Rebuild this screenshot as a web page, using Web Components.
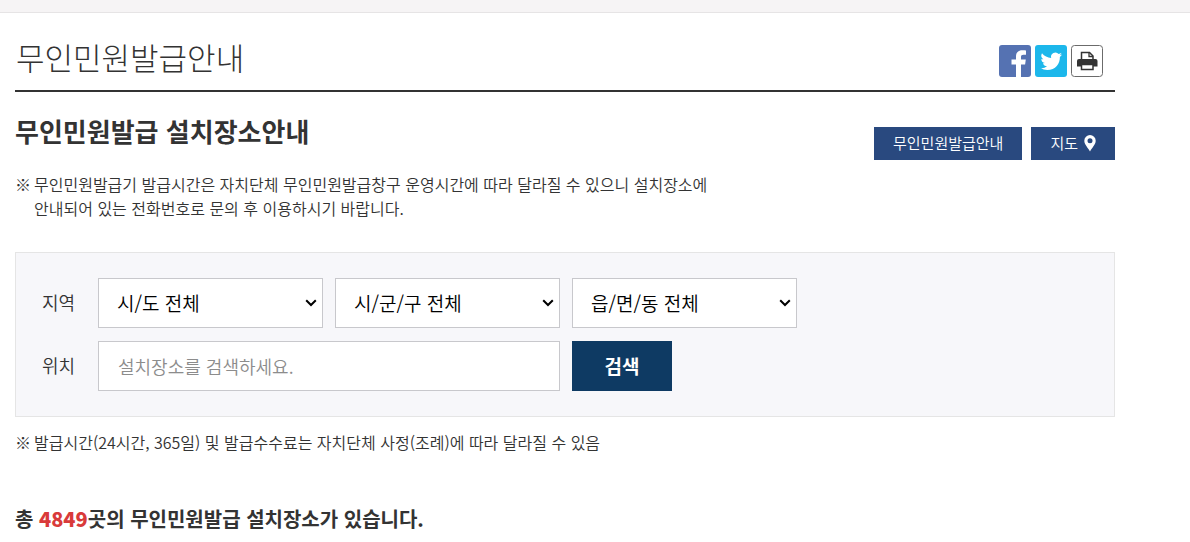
<!DOCTYPE html>
<html lang="ko">
<head>
<meta charset="utf-8">
<meta name="viewport" content="width=device-width, initial-scale=1">
<title>무인민원발급안내</title>
<style>
body {
    margin: 0;
    background: #fff;
    color: #333;
    font-family: "Noto Sans CJK KR", sans-serif;
    font-size: 16px;
    font-weight: 350;
    line-height: 24px;
}
</style>
</head>
<body>
<kiosk-page>
    <page-header slot="header">
        무인민원발급안내
        <share-link slot="share" data-icon="facebook" data-label="페이스북"></share-link>
        <share-link slot="share" data-icon="twitter" data-label="트위터"></share-link>
        <share-link slot="share" data-icon="print" data-label="인쇄"></share-link>
    </page-header>
    <section-heading>
        무인민원발급 설치장소안내
        <nav-button slot="actions">무인민원발급안내</nav-button>
        <nav-button slot="actions" data-icon="pin">지도</nav-button>
    </section-heading>
    <guide-note class="intro">무인민원발급기 발급시간은 자치단체 무인민원발급창구 운영시간에 따라 달라질 수 있으니 설치장소에<br>안내되어 있는 전화번호로 문의 후 이용하시기 바랍니다.</guide-note>
    <search-panel></search-panel>
    <guide-note>발급시간(24시간, 365일) 및 발급수수료는 자치단체 사정(조례)에 따라 달라질 수 있음</guide-note>
    <result-count>4849</result-count>
</kiosk-page>

<script>
const ICONS = {
    facebook: /*html*/`
<svg viewBox="0 0 32 32" aria-hidden="true">
    <rect width="32" height="32" rx="3" fill="#5572b2"/>
    <path fill="#fff" d="M17 32V19.500h-4.500v-5H17V11.500C17 7.500 19.300 5.200 23.200 5.200c1.600 0 2.800.1 3.800.3v4.300h-2.600c-1.700 0-2.400.8-2.400 2.300v2.400h4.800l-.7 5H22V32z"/>
</svg>`,
    twitter: /*html*/`
<svg viewBox="0 0 32 32" aria-hidden="true">
    <rect width="32" height="32" rx="3" fill="#1cb7eb"/>
    <path fill="#fff" transform="translate(5.500 5.500) scale(.9)" d="M24 4.560a9.830 9.830 0 0 1-2.830.78 4.930 4.930 0 0 0 2.170-2.720 9.860 9.860 0 0 1-3.130 1.190 4.920 4.920 0 0 0-8.380 4.490A13.980 13.980 0 0 1 1.670 3.150a4.930 4.930 0 0 0 1.520 6.570 4.900 4.900 0 0 1-2.230-.61 4.930 4.930 0 0 0 3.950 4.890 4.930 4.930 0 0 1-2.220.08 4.930 4.930 0 0 0 4.600 3.420A9.900 9.900 0 0 1 0 19.540a13.940 13.940 0 0 0 7.550 2.210c9.140 0 14.310-7.720 13.980-14.640A10.030 10.030 0 0 0 24 4.560z"/>
</svg>`,
    print: /*html*/`
<svg viewBox="0 0 32 32" aria-hidden="true">
    <rect x=".5" y=".5" width="31" height="31" rx="3" fill="#fff" stroke="#6b6b6b"/>
    <path fill="#fff" stroke="#333" stroke-width="1.500" d="M10.500 15V7.500h8l3.500 3.500v4"/>
    <path fill="none" stroke="#333" stroke-width="1.300" d="M18 7.500v4h4"/>
    <path fill="#333" d="M8 14h16.500a2 2 0 0 1 2 2v5.500H6V16a2 2 0 0 1 2-2z"/>
    <path fill="#fff" stroke="#333" stroke-width="1.500" d="M10.500 19.500H22v5H10.500z"/>
</svg>`,
    pin: /*html*/`
<svg viewBox="0 0 12 18" aria-hidden="true">
    <path fill="#fff" fill-rule="evenodd" d="M6 1a5.700 5.700 0 0 0-5.700 5.700C.3 10.500 4 13.500 6 17.500c2-4 5.700-7 5.700-10.800A5.700 5.700 0 0 0 6 1zm0 3.300a2.500 2.500 0 1 1 0 5 2.500 2.500 0 0 1 0-5z"/>
</svg>`
};

class KioskPage extends HTMLElement {
    constructor() {
        super();
        this.attachShadow({ mode: "open" }).innerHTML = /*html*/`
<style>
:host {
    display: block;
}
.bar {
    height: 12px;
    background: #f6f4f5;
    border-bottom: 1px solid #e6e4e5;
}
.content {
    padding: 0 75px 0 15px;
}
</style>
<div class="bar"></div>
<div class="content">
    <slot name="header"></slot>
    <main><slot></slot></main>
</div>
`;
    }
}

class PageHeader extends HTMLElement {
    constructor() {
        super();
        this.attachShadow({ mode: "open" }).innerHTML = /*html*/`
<style>
:host {
    display: block;
}
header {
    display: flex;
    justify-content: space-between;
    align-items: flex-end;
    padding: 23px 12px 13px 1px;
    border-bottom: 2px solid #333;
}
h1 {
    margin: 0;
    font-size: 31px;
    font-weight: 300;
    line-height: 41px;
}
.share {
    display: flex;
    gap: 4px;
}
</style>
<header>
    <h1><slot></slot></h1>
    <div class="share"><slot name="share"></slot></div>
</header>
`;
    }
}

class ShareLink extends HTMLElement {
    constructor() {
        super();
        this.attachShadow({ mode: "open" });
    }

    connectedCallback() {
        this.shadowRoot.innerHTML = /*html*/`
<style>
:host {
    display: block;
}
a, svg {
    display: block;
    width: 32px;
    height: 32px;
}
</style>
<a href="#" aria-label="${this.getAttribute("data-label")}">${ICONS[this.getAttribute("data-icon")]}</a>
`;
    }
}

class SectionHeading extends HTMLElement {
    constructor() {
        super();
        this.attachShadow({ mode: "open" }).innerHTML = /*html*/`
<style>
:host {
    display: flex;
    justify-content: space-between;
    align-items: flex-end;
    padding-top: 19px;
}
h2 {
    margin: 0;
    padding-bottom: 9px;
    font-size: 26px;
    font-weight: 700;
    line-height: 40px;
}
.actions {
    display: flex;
    gap: 9px;
}
</style>
<h2><slot></slot></h2>
<div class="actions"><slot name="actions"></slot></div>
`;
    }
}

class NavButton extends HTMLElement {
    constructor() {
        super();
        this.attachShadow({ mode: "open" });
    }

    connectedCallback() {
        this.shadowRoot.innerHTML = /*html*/`
<style>
:host {
    display: block;
}
a {
    display: flex;
    align-items: center;
    gap: 6px;
    padding: 4px 19px 5px;
    background: #29497f;
    color: #fff;
    font-size: 15px;
    text-decoration: none;
}
svg {
    width: 12px;
    height: 18px;
}
</style>
<a href="#"><slot></slot>${ICONS[this.getAttribute("data-icon")] || ""}</a>
`;
    }
}

class GuideNote extends HTMLElement {
    constructor() {
        super();
        this.attachShadow({ mode: "open" }).innerHTML = /*html*/`
<style>
:host {
    display: block;
    padding-top: 13px;
}
:host(.intro) {
    padding: 12px 0 32px;
}
p {
    display: flex;
    gap: 3px;
    margin: 0;
}
</style>
<p><span>※</span><span><slot></slot></span></p>
`;
    }
}

class SearchPanel extends HTMLElement {
    constructor() {
        super();
        this.attachShadow({ mode: "open" }).innerHTML = /*html*/`
<style>
:host {
    display: block;
}
form {
    display: grid;
    grid-template-columns: 44px repeat(3, 225px);
    gap: 13px 12px;
    align-items: center;
    padding: 25px 26px;
    background: #f7f7fa;
    border: 1px solid #e5e5e5;
}
label {
    padding-bottom: 2px;
    font-size: 18px;
}
select, input, button {
    box-sizing: border-box;
    width: 100%;
    height: 50px;
    margin: 0;
    border: 1px solid #c8c8cc;
    border-radius: 0;
    background: #fff;
    font-family: inherit;
    font-weight: inherit;
}
select {
    appearance: none;
    padding: 0 24px 2px 18px;
    background: #fff url("data:image/svg+xml,%3Csvg xmlns='http://www.w3.org/2000/svg' width='12' height='8' viewBox='0 0 12 8'%3E%3Cpath d='M1.200 1.200L6 6l4.800-4.800' fill='none' stroke='%23000' stroke-width='2'/%3E%3C/svg%3E") no-repeat right 5px center;
    color: #000;
    font-size: 19px;
}
input {
    grid-column: span 2;
    padding: 0 19px;
    font-size: 18px;
}
input::placeholder {
    color: #8c8c8c;
}
button {
    width: 100px;
    padding: 0 0 2px;
    border: none;
    background: #0e3a63;
    color: #fff;
    font-size: 19px;
    font-weight: 700;
    cursor: pointer;
}
</style>
<form>
    <label for="sido">지역</label>
    <select id="sido"><option>시/도 전체</option></select>
    <select aria-label="시/군/구"><option>시/군/구 전체</option></select>
    <select aria-label="읍/면/동"><option>읍/면/동 전체</option></select>
    <label for="place">위치</label>
    <input id="place" type="text" placeholder="설치장소를 검색하세요.">
    <button type="submit">검색</button>
</form>
`;
        this.shadowRoot.querySelector("form").addEventListener("submit", (e) => e.preventDefault());
    }
}

class ResultCount extends HTMLElement {
    constructor() {
        super();
        this.attachShadow({ mode: "open" }).innerHTML = /*html*/`
<style>
:host {
    display: block;
    padding-top: 49px;
}
p {
    margin: 0;
    font-size: 20px;
    font-weight: 700;
    line-height: 32px;
}
strong {
    color: #d93a3a;
}
</style>
<p>총 <strong><slot></slot></strong>곳의 무인민원발급 설치장소가 있습니다.</p>
`;
    }
}

customElements.define("kiosk-page", KioskPage);
customElements.define("page-header", PageHeader);
customElements.define("share-link", ShareLink);
customElements.define("section-heading", SectionHeading);
customElements.define("nav-button", NavButton);
customElements.define("guide-note", GuideNote);
customElements.define("search-panel", SearchPanel);
customElements.define("result-count", ResultCount);
</script>
</body>
</html>
